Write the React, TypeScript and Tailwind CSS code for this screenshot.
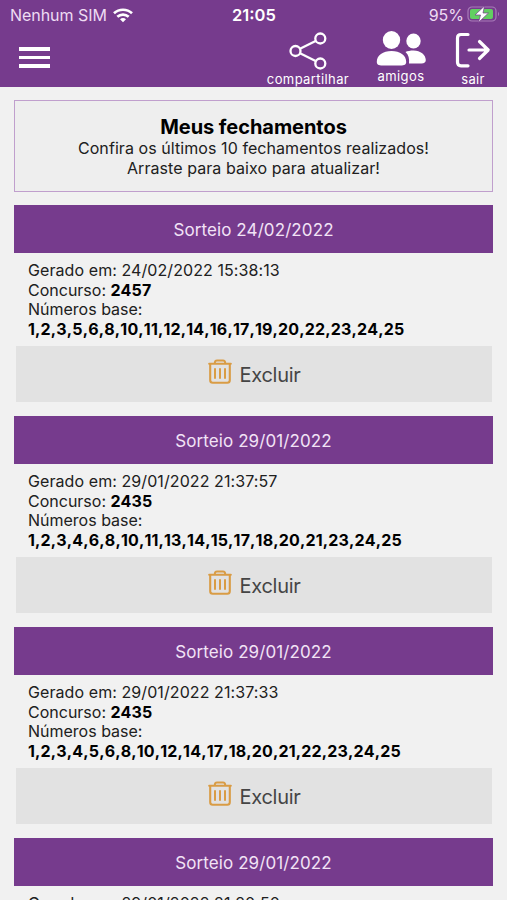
const draws = [
  { date: "24/02/2022", created: "24/02/2022 15:38:13", contest: "2457", numbers: "1,2,3,5,6,8,10,11,12,14,16,17,19,20,22,23,24,25" },
  { date: "29/01/2022", created: "29/01/2022 21:37:57", contest: "2435", numbers: "1,2,3,4,6,8,10,11,13,14,15,17,18,20,21,23,24,25" },
  { date: "29/01/2022", created: "29/01/2022 21:37:33", contest: "2435", numbers: "1,2,3,4,5,6,8,10,12,14,17,18,20,21,22,23,24,25" },
];

const nextDraw = { date: "29/01/2022", created: "29/01/2022 21:20:50" };

function WifiIcon() {
  return (
    <svg className="h-[15px] w-[20px]" viewBox="0 0 20 15" fill="none" stroke="white" strokeWidth="2.7">
      <path d="M1 5.2C6 .6 14 .6 19 5.2" />
      <path d="M4.3 8.7c3.3-2.9 8.1-2.9 11.4 0" />
      <path d="M7 11.2c1.7-1.5 4.3-1.5 6 0L10 14.3Z" fill="white" stroke="none" />
    </svg>
  );
}

function BatteryIcon() {
  return (
    <svg className="-mt-[2px] h-[18px] w-[33px]" viewBox="0 0 33 18" fill="none">
      <rect x="1" y="2" width="28" height="14" rx="4" stroke="#a77bb8" strokeWidth="1.2" />
      <path d="M31 7v4c1.5-.7 1.5-3.3 0-4Z" fill="#a77bb8" />
      <rect x="3" y="4" width="23" height="10" rx="2" fill="#62cf61" />
      <path d="M17.5 1 8 10h5.5l-2 7.4L21.5 8H16Z" fill="white" stroke="#763b8d" strokeWidth=".7" />
    </svg>
  );
}

function ShareIcon() {
  return (
    <svg className="h-[38px] w-[38px]" viewBox="0 0 38 38" fill="none" stroke="white" strokeWidth="2.3">
      <path d="M11 16.8 26.6 9M11 21.2l15.6 7.8" />
      <circle cx="6.5" cy="19" r="5" />
      <circle cx="31.3" cy="6.5" r="5" />
      <circle cx="31.3" cy="31.5" r="5" />
    </svg>
  );
}

function FriendsIcon() {
  return (
    <svg className="h-[35px] w-[50px]" viewBox="0 0 50 35" fill="white">
      <ellipse cx="15.5" cy="9" rx="8.7" ry="9" />
      <path d="M6.5 34.5c-4 0-5.7-1-5.7-3.5C.8 24 7 20 15.5 20s14.7 4 14.7 11c0 2.5-1.7 3.5-5.7 3.5Z" />
      <ellipse cx="37.5" cy="10" rx="7.2" ry="7.6" />
      <path d="M29.5 21c2-1 4.8-1.5 8-1.5 7 0 12.3 4.4 12.3 9.5 0 2.3-1.4 3.4-4.3 3.4H33c.5-4.7-.4-8.5-3.5-11.4Z" />
    </svg>
  );
}

function ExitIcon() {
  return (
    <svg className="h-[36px] w-[36px]" viewBox="0 0 36 36" fill="none" stroke="white" strokeWidth="3.2" strokeLinecap="round" strokeLinejoin="round">
      <path d="M13 2.5H6Q2.5 2.5 2.5 6v24.3q0 3.5 3.5 3.5h7M14 18h19M24.5 9.5l8.7 8.5-8.7 8.5" />
    </svg>
  );
}

function TrashIcon() {
  return (
    <svg className="h-[25px] w-[24px] shrink-0" viewBox="0 0 24 25" fill="none" stroke="#d99c45" strokeWidth="2.1" strokeLinecap="round" strokeLinejoin="round">
      <path d="M1.2 4.8h21.6M6.8 4.5c0-2.5.6-3 2.3-3h5.8c1.7 0 2.3.5 2.3 3M2.2 5v16.3q0 2.5 2.5 2.5h14.6q2.5 0 2.5-2.5V5" />
      <path d="M7 10v9M12 10v9M17 10v9" strokeWidth="2" />
    </svg>
  );
}

function DrawTitle({ date }: { date: string }) {
  return (
    <h2 className="h-[48px] bg-[#763b8d] text-center text-[17px] leading-[50px] tracking-[0.1px] text-[#f2e3f6]">
      Sorteio {date}
    </h2>
  );
}

export default function App() {
  return (
    <div className="h-[900px] w-[507px] overflow-hidden bg-[#f1f1f1] font-['Inter',sans-serif] text-[#202020]">
      <header className="h-[87px] bg-[#763b8d] text-white">
        <div className="grid h-[30px] grid-cols-3 items-center pl-[10px] pr-[7px]">
          <div className="flex items-center gap-[6px] whitespace-nowrap text-[16px] leading-[30px]">
            <span className="tracking-[-0.05px] text-[#eedcf3]">Nenhum SIM</span>
            <WifiIcon />
          </div>
          <div className="pr-[2px] text-center text-[16.5px] font-semibold leading-[30px]">21:05</div>
          <div className="flex items-center justify-end gap-[3px] text-[16px] leading-[30px]">
            <span className="text-[#eedcf3]">95%</span>
            <BatteryIcon />
          </div>
        </div>
        <nav className="flex h-[57px] items-start pl-[19px] pr-[16px] text-[13px] leading-[16px]">
          <button className="mt-[17px] flex w-[31px] flex-col gap-[5px]" aria-label="Menu">
            <span className="h-[4px] w-full bg-white" />
            <span className="h-[3px] w-full bg-white" />
            <span className="h-[4px] w-full bg-white" />
          </button>
          <div className="ml-auto flex w-[84px] flex-col items-center pt-[2px]">
            <ShareIcon />
            <span className="mt-[1px] tracking-[0.4px]">compartilhar</span>
          </div>
          <div className="ml-[25px] flex w-[52px] flex-col items-center pt-[1px]">
            <FriendsIcon />
            <span className="mt-[2px] tracking-[0.4px]">amigos</span>
          </div>
          <div className="ml-[28px] flex w-[36px] flex-col items-center pt-[2px]">
            <ExitIcon />
            <span className="mt-[3px] tracking-[0.3px]">sair</span>
          </div>
        </nav>
      </header>
      <main className="flex flex-col px-[14px] pt-[13px]">
        <section className="mb-[13px] h-[92px] border border-[#c09fcd] bg-[#eeeeee] pt-[15px] text-center text-[16px] leading-[19.6px]">
          <h1 className="text-[20px] font-bold leading-[23px] tracking-[-0.05px] text-black">Meus fechamentos</h1>
          <p className="tracking-[0.07px]">Confira os últimos 10 fechamentos realizados!</p>
          <p className="tracking-[0.07px]">Arraste para baixo para atualizar!</p>
        </section>
        {draws.map((draw) => (
          <article key={draw.created} className="mb-[14px] h-[197px] shrink-0">
            <DrawTitle date={draw.date} />
            <div className="h-[92px] whitespace-nowrap pl-[14px] pt-[8px] text-[16px] leading-[19.6px]">
              <p className="tracking-[0.08px]">Gerado em: {draw.created}</p>
              <p>Concurso: <b className="tracking-[0.2px] text-black">{draw.contest}</b></p>
              <p>Números base:</p>
              <p className="font-bold tracking-[0.16px] text-black [font-kerning:none]">{draw.numbers}</p>
            </div>
            <button className="mx-[2px] mt-[0.6px] flex h-[56px] w-[476px] items-center justify-center gap-[7px] bg-[#e2e2e2] pl-[1px] text-[20px] tracking-[-0.25px] text-[#454545]">
              <span className="-mt-[4px]"><TrashIcon /></span>
              <span className="pt-[3px]">Excluir</span>
            </button>
          </article>
        ))}
        <article className="shrink-0">
          <DrawTitle date={nextDraw.date} />
          <p className="whitespace-nowrap pl-[14px] pt-[8px] text-[16px] leading-[19.6px] tracking-[0.08px]">Gerado em: {nextDraw.created}</p>
        </article>
      </main>
    </div>
  );
}
